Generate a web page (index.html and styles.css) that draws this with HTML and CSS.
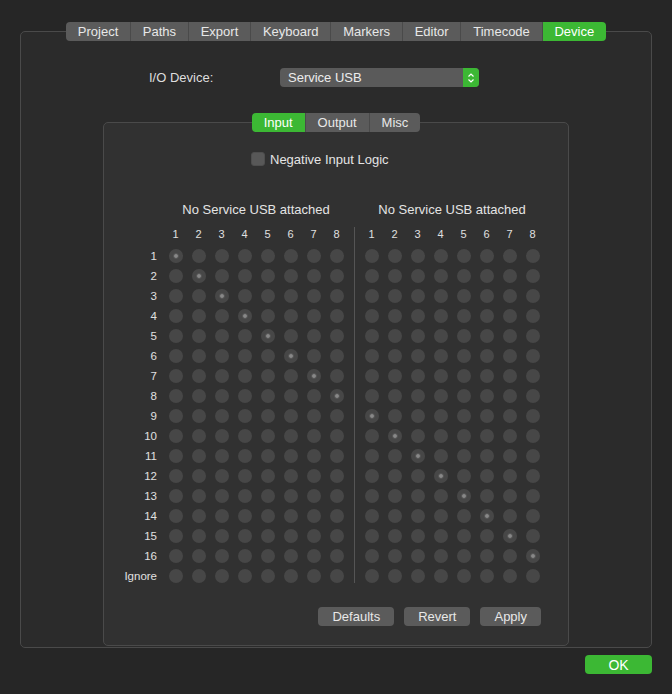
FILE: index.html
```html
<!DOCTYPE html>
<html lang="en">
<head>
    <meta charset="UTF-8">
    <title>Preferences</title>
    <link rel="stylesheet" href="styles.css">
</head>
<body>

<div class="window">
    <div class="tab-bar">
        <div class="tabs">
            <div class="tab">Project</div>
            <div class="tab">Paths</div>
            <div class="tab">Export</div>
            <div class="tab">Keyboard</div>
            <div class="tab">Markers</div>
            <div class="tab">Editor</div>
            <div class="tab">Timecode</div>
            <div class="tab active">Device</div>
        </div>
    </div>

    <div class="panel">
        <div class="field">
            <label class="field-label">I/O Device:</label>
            <div class="select">
                <span class="select-value">Service USB</span>
                <span class="stepper">
                    <svg width="8" height="12" viewBox="0 0 8 12">
                        <path d="M1.5 4.5 L4 2 L6.5 4.5" fill="none" stroke="#fff" stroke-width="1.2"/>
                        <path d="M1.5 7.5 L4 10 L6.5 7.5" fill="none" stroke="#fff" stroke-width="1.2"/>
                    </svg>
                </span>
            </div>
        </div>

        <div class="sub-tab-bar">
            <div class="tabs">
                <div class="tab active">Input</div>
                <div class="tab">Output</div>
                <div class="tab">Misc</div>
            </div>
        </div>

        <div class="subpanel">
            <label class="check">
                <span class="checkbox"></span>
                Negative Input Logic
            </label>

            <div class="matrix" id="matrix">
                <div class="bank-title left">No Service USB attached</div>
                <div class="bank-title right">No Service USB attached</div>
                <div class="divider"></div>
            </div>

            <div class="actions">
                <button class="btn">Defaults</button>
                <button class="btn">Revert</button>
                <button class="btn">Apply</button>
            </div>
        </div>
    </div>

    <div class="footer">
        <button class="btn ok">OK</button>
    </div>
</div>

<script>
    // monta a matriz de entradas: 16 linhas + Ignore, dois bancos de 8
    const matrix = document.getElementById('matrix');

    function cell(cls, text) {
        const el = document.createElement('div');
        el.className = cls;
        if (text !== undefined) el.textContent = text;
        matrix.appendChild(el);
        return el;
    }

    cell('corner');
    for (let bank = 0; bank < 2; bank++) {
        for (let c = 1; c <= 8; c++) cell('col-num', c);
    }

    const rows = [];
    for (let r = 1; r <= 16; r++) rows.push(String(r));
    rows.push('Ignore');

    rows.forEach((label, i) => {
        cell('row-label', label);
        for (let bank = 0; bank < 2; bank++) {
            for (let c = 0; c < 8; c++) {
                const on = i < 16 && Math.floor(i / 8) === bank && i % 8 === c;
                cell(on ? 'dot on' : 'dot');
            }
        }
    });
</script>

</body>
</html>
```

FILE: styles.css
```css
body {
    margin: 0;
    width: 672px;
    height: 694px;
    background-color: #262626;
    font-family: "Liberation Sans", Arial, sans-serif;
    font-size: 13px;
    color: #e4e4e4;
    overflow: hidden;
}
.window {
    padding-top: 22px;
}
.tab-bar, .sub-tab-bar {
    display: flex;
    justify-content: center;
    position: relative;
    z-index: 1;
    margin-bottom: -10px;
}
.tabs {
    display: flex;
    border-radius: 4px;
    overflow: hidden;
}
.tab {
    height: 19px;
    line-height: 19px;
    padding: 0 12px;
    background-color: #5b5b5b;
    border-left: 1px solid #4a4a4a;
    color: #e8e8e8;
}
.tab:first-child {
    border-left: none;
}
.tab-bar .tab {
    padding: 0 11.8px;
}
.tab.active {
    background-color: #3cb834;
    color: #ffffff;
}
.panel {
    margin: 0 20px;
    height: 617px;
    box-sizing: border-box;
    border: 1px solid #4a4a4a;
    border-radius: 5px;
    background-color: #2b2b2b;
    padding-top: 36px;
}
.field {
    display: flex;
    align-items: center;
    height: 19px;
    padding-left: 128px;
}
.field-label {
    width: 131px;
    color: #dedede;
}
.select {
    display: flex;
    width: 199px;
    height: 19px;
    border-radius: 4px;
    overflow: hidden;
    background-color: #5a5a5a;
}
.select-value {
    flex: 1;
    line-height: 19px;
    padding-left: 8px;
    color: #ececec;
}
.stepper {
    width: 16px;
    display: flex;
    align-items: center;
    justify-content: center;
    background-color: #3cb834;
}
.sub-tab-bar {
    margin-top: 26px;
    margin-left: 82px;
    width: 466px;
}
.subpanel {
    margin-left: 82px;
    width: 466px;
    height: 524px;
    box-sizing: border-box;
    border: 1px solid #4a4a4a;
    border-radius: 5px;
    background-color: #313131;
    padding-top: 29px;
}
.check {
    display: flex;
    align-items: center;
    gap: 5px;
    height: 14px;
    margin-left: 147px;
    line-height: 13px;
    color: #e4e4e4;
}
.checkbox {
    width: 14px;
    height: 14px;
    box-sizing: border-box;
    border-radius: 3px;
    background-color: #585858;
    border: 1px solid #4e4e4e;
}
.matrix {
    display: grid;
    grid-template-columns: 60px repeat(8, 23px) 12px repeat(8, 23px);
    grid-template-rows: 22px 22px repeat(17, 20px);
    margin-top: 36px;
}
.bank-title {
    grid-row: 1;
    line-height: 16px;
    text-align: center;
    color: #e4e4e4;
}
.bank-title.left {
    grid-column: 1 / 10;
    padding-left: 60px;
}
.bank-title.right {
    grid-column: 11 / 19;
}
.divider {
    grid-column: 10;
    grid-row: 1 / -1;
    justify-self: center;
    width: 1px;
    margin: 25px 0 3px;
    background-color: #555555;
}
.col-num {
    line-height: 20px;
    text-align: center;
    font-size: 11px;
    color: #e0e0e0;
}
.row-label {
    line-height: 20px;
    text-align: right;
    padding-right: 7px;
    font-size: 11.5px;
    color: #e0e0e0;
}
.dot {
    width: 14px;
    height: 14px;
    justify-self: center;
    align-self: center;
    border-radius: 50%;
    background-color: #474747;
}
.dot.on {
    background: radial-gradient(circle, #888888 0 1.4px, #5c5c5c 2.2px, #474747 3.2px);
}
.actions {
    display: flex;
    justify-content: flex-end;
    gap: 10px;
    margin-top: 21px;
    padding-right: 27px;
}
.btn {
    height: 19px;
    padding: 0 14px;
    border: none;
    border-radius: 4px;
    background-color: #5b5b5b;
    color: #e8e8e8;
    font-family: inherit;
    font-size: 13px;
}
.footer {
    display: flex;
    justify-content: flex-end;
    margin-top: 7px;
    padding-right: 20px;
}
.btn.ok {
    width: 67px;
    background-color: #3cb834;
    color: #ffffff;
    font-size: 14px;
}
```
